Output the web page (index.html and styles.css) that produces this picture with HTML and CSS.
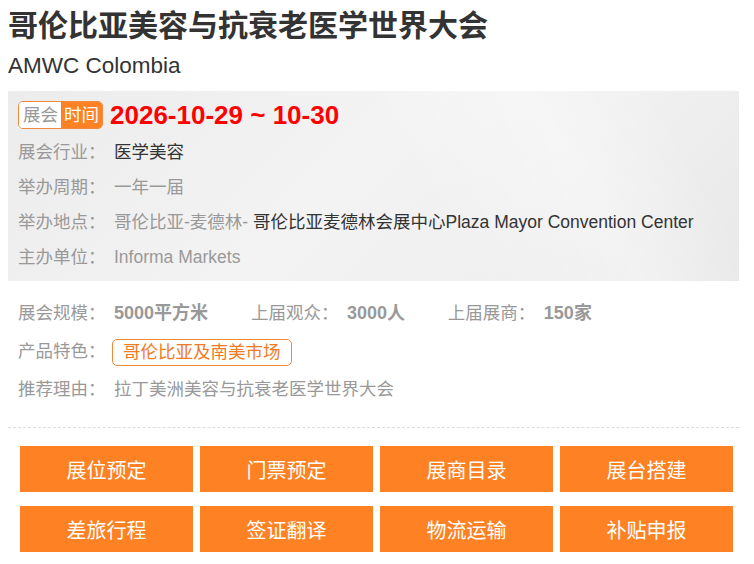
FILE: index.html
```html
<!DOCTYPE html>
<html lang="zh-CN">
<head>
  <meta charset="UTF-8">
  <title>哥伦比亚美容与抗衰老医学世界大会</title>
  <link rel="stylesheet" href="styles.css">
</head>
<body>
  <div class="expo">
    <h1 class="expo-title">哥伦比亚美容与抗衰老医学世界大会</h1>
    <div class="expo-subtitle">AMWC Colombia</div>

    <div class="info-box">
      <div class="date-row">
        <span class="date-badge"><span class="badge-left">展会</span><span class="badge-right">时间</span></span>
        <span class="date">2026-10-29 ~ 10-30</span>
      </div>
      <div class="row"><span class="label">展会行业：</span><span class="value dark">医学美容</span></div>
      <div class="row"><span class="label">举办周期：</span><span class="value">一年一届</span></div>
      <div class="row"><span class="label">举办地点：</span><span class="value">哥伦比亚-麦德林- </span><span class="value dark">哥伦比亚麦德林会展中心Plaza Mayor Convention Center</span></div>
      <div class="row"><span class="label">主办单位：</span><span class="value">Informa Markets</span></div>
    </div>

    <div class="extra">
      <div class="row">
        <span class="label">展会规模：</span><span class="stat">5000平方米</span>
        <span class="label">上届观众：</span><span class="stat">3000人</span>
        <span class="label">上届展商：</span><span class="stat">150家</span>
      </div>
      <div class="row"><span class="label tag-label">产品特色：</span><span class="tag">哥伦比亚及南美市场</span></div>
      <div class="row"><span class="label">推荐理由：</span><span class="value">拉丁美洲美容与抗衰老医学世界大会</span></div>
    </div>

    <div class="actions">
      <a class="action" href="#">展位预定</a>
      <a class="action" href="#">门票预定</a>
      <a class="action" href="#">展商目录</a>
      <a class="action" href="#">展台搭建</a>
      <a class="action" href="#">差旅行程</a>
      <a class="action" href="#">签证翻译</a>
      <a class="action" href="#">物流运输</a>
      <a class="action" href="#">补贴申报</a>
    </div>
  </div>
</body>
</html>
```

FILE: styles.css
```css
body { margin: 8px; background: #fff; font-family: "Liberation Sans", "Noto Sans CJK SC", sans-serif; color: #333; }
.expo { width: 731px; }
.expo-title { margin: 0; font-size: 30px; line-height: 36px; font-weight: bold; color: #333; }
.expo-subtitle { margin-top: 6px; font-size: 22.5px; line-height: 32px; color: #333; }

/* grey info block */
.info-box {
  margin-top: 9px;
  padding: 10px 10px 6px;
  background:
    linear-gradient(60deg, rgba(255,255,255,0) 55%, rgba(255,255,255,0.35) 75%, rgba(255,255,255,0) 90%),
    linear-gradient(135deg, #ececec 0%, #f3f3f3 45%, #f0f0f0 70%, #e8e8e8 100%);
}
.date-row { display: flex; align-items: center; gap: 7px; height: 28px; margin-bottom: 6px; }
.date-badge { display: inline-flex; height: 28px; border: 1px solid #f08a3a; border-radius: 5px; overflow: hidden; box-sizing: border-box; font-size: 17.5px; line-height: 26px; }
.badge-left { background: #fff; color: #999; padding: 0 3px 0 4px; }
.badge-right { background: #fe8123; color: #fff; padding: 0 3px; }
.date { font-size: 26px; font-weight: bold; color: #f00; line-height: 28px; }

.row { font-size: 17.5px; line-height: 35px; color: #999; white-space: nowrap; }
.label { display: inline-block; width: 96px; color: #999; }
.value { color: #999; }
.value.dark { color: #333; }

.extra { padding: 13px 10px 19px; border-bottom: 1px dashed #ddd; }
.extra .row { line-height: 38px; }
.stat { font-weight: bold; font-size: 18px; color: #999; margin-right: 38px; }
.tag-label { width: 94px; }
.tag { display: inline-block; border: 1px solid #f08a3a; border-radius: 5px; color: #f07b25; line-height: 25px; padding: 0 10px; vertical-align: middle; }

/* orange buttons */
.actions { display: grid; grid-template-columns: repeat(4, 173px); column-gap: 7px; row-gap: 14px; padding: 18px 12px 0; }
.action { display: flex; align-items: center; justify-content: center; height: 46px; background: #fe8123; color: #fff; font-size: 20px; text-decoration: none; }
```
